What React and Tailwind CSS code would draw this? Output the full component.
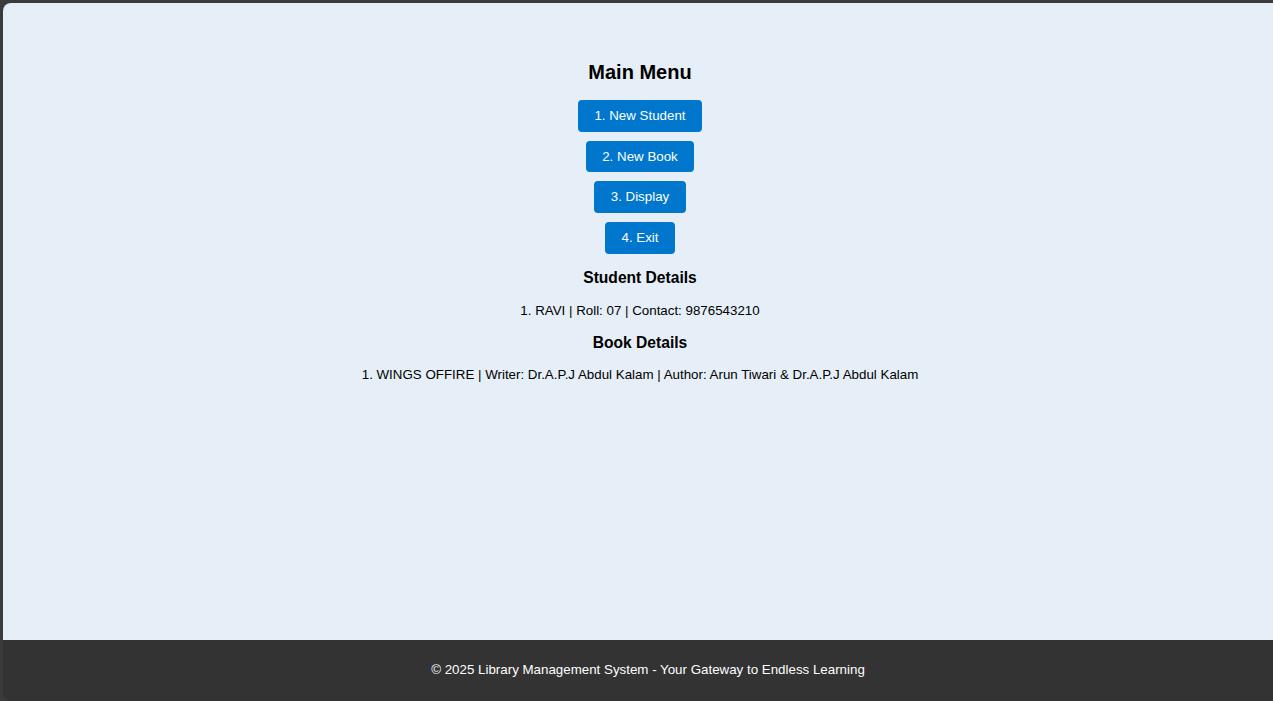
import React from 'react';

const menu = ['1. New Student', '2. New Book', '3. Display', '4. Exit'];

export default function App() {
  return (
    <div className="h-screen flex bg-[#3b3b3b] pl-[3px] pt-[3px] font-['Liberation_Sans',Arial,sans-serif] text-black">
      <div className="flex-1 flex flex-col">
        {/* main panel */}
        <main className="flex-1 bg-[#e6eff7] rounded-tl-lg flex flex-col items-center pt-[58px] pl-[4px]">
          <h2 className="text-[20px] leading-[23px] font-bold mb-[16px]">Main Menu</h2>

          <div className="flex flex-col items-center gap-[9px]">
            {menu.map((m) => (
              <button
                key={m}
                className="h-[31.7px] px-[16.5px] bg-[#0077cc] text-white text-[13.33px] rounded-[4px]"
              >
                {m}
              </button>
            ))}
          </div>

          <h3 className="mt-[15px] text-[15.6px] leading-[18px] font-bold">Student Details</h3>
          <p className="mt-[16.5px] text-[13.33px] leading-[15px]">1. RAVI | Roll: 07 | Contact: 9876543210</p>

          <h3 className="mt-[15.5px] text-[15.6px] leading-[18px] font-bold">Book Details</h3>
          <p className="mt-[15.5px] text-[13.33px] leading-[15px]">
            1. WINGS OFFIRE | Writer: Dr.A.P.J Abdul Kalam | Author: Arun Tiwari &amp; Dr.A.P.J Abdul Kalam
          </p>
        </main>

        {/* footer */}
        <footer className="h-[61px] shrink-0 bg-[#333333] rounded-bl-lg flex items-center justify-center pb-[2px] pl-[20px]">
          <p className="text-[13.33px] text-white">© 2025 Library Management System - Your Gateway to Endless Learning</p>
        </footer>
      </div>
    </div>
  );
}
